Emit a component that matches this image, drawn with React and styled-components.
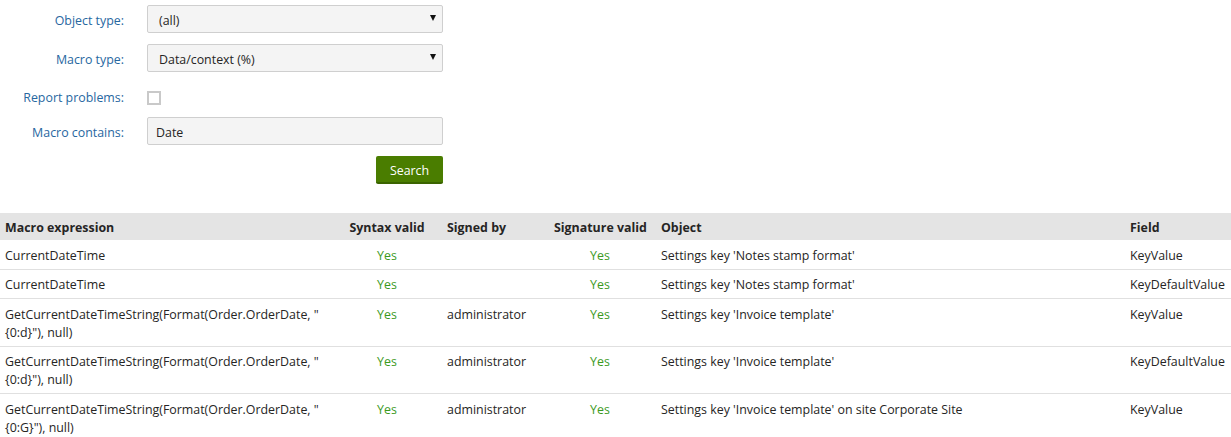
import React from "react";
import styled, { createGlobalStyle } from "styled-components";

const Global = createGlobalStyle`
  html, body { margin: 0; padding: 0; background: #fff; }
  body {
    font-family: "Open Sans", "Noto Sans", "Liberation Sans", sans-serif;
    font-size: 12.4px;
    color: #262524;
  }
`;

const Page = styled.div`
  width: 1231px;
  padding-top: 5px;
`;

const Form = styled.div`
  display: flex;
  flex-direction: column;
`;

const FormRow = styled.div`
  display: grid;
  grid-template-columns: 124px 296px;
  column-gap: 23px;
  align-items: center;
  height: 28px;
  margin-bottom: ${(p) => p.$mb}px;
`;

const Label = styled.label`
  text-align: right;
  color: #27679f;
  white-space: nowrap;
  padding-top: ${(p) => (p.$pt != null ? p.$pt : 2)}px;
`;

const SelectBox = styled.div`
  position: relative;
  box-sizing: border-box;
  height: 28px;
  border: 1px solid #cfcfcf;
  border-radius: 2px;
  background: #f4f4f4;
  display: flex;
  align-items: center;
  padding: 2px 0 0 11px;
  color: #262524;
`;

const Caret = styled.span`
  position: absolute;
  right: 6px;
  top: 9px;
  width: 0;
  height: 0;
  border-left: 3.5px solid transparent;
  border-right: 3.5px solid transparent;
  border-top: 6px solid #111;
`;

const Checkbox = styled.span`
  display: block;
  box-sizing: border-box;
  width: 14px;
  height: 14px;
  border: 2px solid #c9c9c9;
  background: #fff;
  margin-top: 2px;
`;

const TextInput = styled.div`
  box-sizing: border-box;
  height: 28px;
  border: 1px solid #cfcfcf;
  border-radius: 2px;
  background: #f4f4f4;
  display: flex;
  align-items: center;
  padding: 2px 0 0 8px;
`;

const ButtonRow = styled.div`
  width: 443px;
  display: flex;
  justify-content: flex-end;
  margin-bottom: 29px;
`;

const Button = styled.button`
  box-sizing: border-box;
  width: 67px;
  height: 28px;
  border: none;
  border-bottom: 2px solid #3a6400;
  border-radius: 2px;
  background: #4a7d00;
  color: #fff;
  font-family: inherit;
  font-size: 12.4px;
  padding: 2px 0 0 0;
  cursor: pointer;
`;

const Table = styled.table`
  width: 1231px;
  border-collapse: collapse;
  table-layout: fixed;
`;

const Th = styled.th`
  background: #e4e4e4;
  font-weight: 700;
  text-align: ${(p) => (p.$center ? "center" : "left")};
  height: 27px;
  box-sizing: border-box;
  padding: 5.5px ${(p) => (p.$pr != null ? p.$pr : 5)}px 3.5px ${(p) => (p.$pl != null ? p.$pl : 5)}px;
  line-height: 18px;
  color: #262524;
  white-space: nowrap;
`;

const Tr = styled.tr`
  border-bottom: 1px solid #e0e0e0;
`;

const Td = styled.td`
  vertical-align: top;
  padding: 6.5px ${(p) => (p.$pr != null ? p.$pr : 5)}px 4px ${(p) => (p.$pl != null ? p.$pl : 5)}px;
  line-height: 18px;
  text-align: ${(p) => (p.$center ? "center" : "left")};
  color: ${(p) => (p.$yes ? "#3c9a1e" : "#262524")};
  white-space: nowrap;
`;

const cols = [342, 100, 107, 107, 469, 106];

const rows = [
  { expr: ["CurrentDateTime"], syntax: "Yes", signed: "", sig: "Yes", obj: "Settings key 'Notes stamp format'", field: "KeyValue" },
  { expr: ["CurrentDateTime"], syntax: "Yes", signed: "", sig: "Yes", obj: "Settings key 'Notes stamp format'", field: "KeyDefaultValue" },
  { expr: ['GetCurrentDateTimeString(Format(Order.OrderDate, "', '{0:d}"), null)'], syntax: "Yes", signed: "administrator", sig: "Yes", obj: "Settings key 'Invoice template'", field: "KeyValue" },
  { expr: ['GetCurrentDateTimeString(Format(Order.OrderDate, "', '{0:d}"), null)'], syntax: "Yes", signed: "administrator", sig: "Yes", obj: "Settings key 'Invoice template'", field: "KeyDefaultValue" },
  { expr: ['GetCurrentDateTimeString(Format(Order.OrderDate, "', '{0:G}"), null)'], syntax: "Yes", signed: "administrator", sig: "Yes", obj: "Settings key 'Invoice template' on site Corporate Site", field: "KeyValue" },
];

export default function App() {
  return (
    <Page>
      <Global />
      <Form>
        <FormRow $mb={11}>
          <Label>Object type:</Label>
          <SelectBox>
            (all)
            <Caret />
          </SelectBox>
        </FormRow>
        <FormRow $mb={11}>
          <Label>Macro type:</Label>
          <SelectBox>
            Data/context (%)
            <Caret />
          </SelectBox>
        </FormRow>
        <FormRow $mb={6}>
          <Label $pt={0}>Report problems:</Label>
          <Checkbox />
        </FormRow>
        <FormRow $mb={11}>
          <Label>Macro contains:</Label>
          <TextInput>Date</TextInput>
        </FormRow>
        <ButtonRow>
          <Button>Search</Button>
        </ButtonRow>
      </Form>
      <Table>
        <colgroup>
          {cols.map((w, i) => (
            <col key={i} style={{ width: w }} />
          ))}
        </colgroup>
        <thead>
          <tr>
            <Th>Macro expression</Th>
            <Th $center $pl={0} $pr={10}>Syntax valid</Th>
            <Th>Signed by</Th>
            <Th $center $pr={10}>Signature valid</Th>
            <Th>Object</Th>
            <Th>Field</Th>
          </tr>
        </thead>
        <tbody>
          {rows.map((r, i) => (
            <Tr key={i}>
              <Td>
                {r.expr.map((l, j) => (
                  <React.Fragment key={j}>
                    {j > 0 && <br />}
                    {l}
                  </React.Fragment>
                ))}
              </Td>
              <Td $center $yes $pl={0} $pr={10}>{r.syntax}</Td>
              <Td>{r.signed}</Td>
              <Td $center $yes $pr={10}>{r.sig}</Td>
              <Td>{r.obj}</Td>
              <Td>{r.field}</Td>
            </Tr>
          ))}
        </tbody>
      </Table>
    </Page>
  );
}
